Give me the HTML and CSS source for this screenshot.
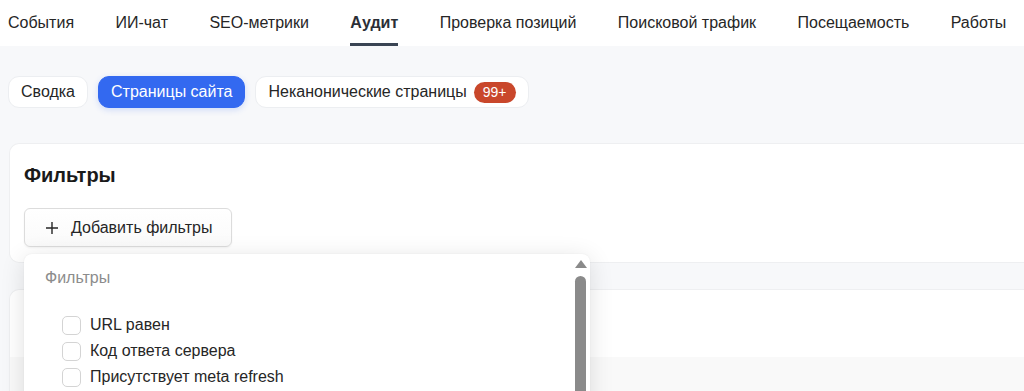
FILE: index.html
```html
<!DOCTYPE html>
<html lang="ru">
<head>
  <meta charset="UTF-8">
  <meta name="viewport" content="width=device-width, initial-scale=1.0">
  <title>Аудит</title>
  <link rel="stylesheet" href="styles.css">
</head>
<body>

  <nav class="topnav">
    <a class="nav-item">События</a>
    <a class="nav-item">ИИ-чат</a>
    <a class="nav-item">SEO-метрики</a>
    <a class="nav-item active">Аудит</a>
    <a class="nav-item">Проверка позиций</a>
    <a class="nav-item">Поисковой трафик</a>
    <a class="nav-item">Посещаемость</a>
    <a class="nav-item">Работы</a>
  </nav>

  <main class="content">
    <div class="tabs">
      <button class="tab">Сводка</button>
      <button class="tab selected">Страницы сайта</button>
      <button class="tab">Неканонические страницы <span class="badge">99+</span></button>
    </div>

    <section class="card filters">
      <h2>Фильтры</h2>
      <div class="add-wrap">
        <button class="add-btn">
          <svg width="14" height="14" viewBox="0 0 14 14"><path d="M7 1v12M1 7h12" stroke="#262626" stroke-width="1.4" fill="none"/></svg>
          Добавить фильтры
        </button>

        <!-- dropdown with filter list -->
        <div class="dropdown">
          <div class="dropdown-list">
            <div class="group-label">Фильтры</div>
            <label class="option"><span class="check"></span>URL равен</label>
            <label class="option"><span class="check"></span>Код ответа сервера</label>
            <label class="option"><span class="check"></span>Присутствует meta refresh</label>
          </div>
          <div class="scrollbar">
            <div class="arrow"></div>
            <div class="thumb"></div>
          </div>
        </div>
      </div>
    </section>

    <section class="card results">
      <div class="results-top"></div>
      <div class="results-head"></div>
    </section>
  </main>

</body>
</html>
```

FILE: styles.css
```css
* {
  box-sizing: border-box;
}
html, body {
  margin: 0;
  height: 100%;
  overflow: hidden;
}
body {
  background-color: #f7f8fa;
  color: #262626;
  font-family: "Liberation Sans", Arial, sans-serif;
  font-size: 16px;
}
.topnav {
  display: flex;
  gap: 41.4px;
  height: 46px;
  padding-left: 8px;
  background: #fff;
  white-space: nowrap;
}
.nav-item {
  display: flex;
  align-items: center;
  height: 46px;
  padding-top: 3px;
  border-bottom: 3px solid transparent;
  color: #262626;
}
.nav-item.active {
  font-weight: bold;
  color: #2b2f36;
  border-bottom-color: #3a4453;
}
.content {
  padding: 30px 0 0 9px;
}
.tabs {
  display: flex;
  gap: 10px;
  margin-left: -1px;
}
.tab {
  display: flex;
  align-items: center;
  gap: 7px;
  height: 32px;
  padding: 0 12px;
  border: 1px solid #eceef1;
  border-radius: 11px;
  background: #fff;
  color: #262626;
  font-family: inherit;
  font-size: 16px;
}
.tab.selected {
  background: #3369f0;
  border-color: #3369f0;
  color: #fff;
  box-shadow: 0 2px 6px rgba(51, 105, 240, 0.2);
}
.badge {
  display: inline-flex;
  align-items: center;
  height: 21px;
  padding: 0 9px;
  border-radius: 11px;
  background: #c9472b;
  color: #fff;
  font-size: 14px;
}
.card {
  background: #fff;
  border: 1px solid #eeeff1;
  border-right: none;
  border-radius: 10px 0 0 10px;
}
.filters {
  margin-top: 35px;
  padding: 19px 0 15px 14px;
}
.filters h2 {
  margin: 0 0 21px;
  font-size: 20px;
  line-height: 24px;
  color: #1a1a1a;
}
.add-wrap {
  position: relative;
}
.add-btn {
  display: flex;
  align-items: center;
  gap: 12px;
  height: 39px;
  padding: 0 19px 0 20px;
  border: 1px solid #dcdcdc;
  border-radius: 6px;
  background: linear-gradient(#fff, #fafafa);
  box-shadow: 0 1px 2px rgba(0, 0, 0, 0.05);
  color: #262626;
  font-family: inherit;
  font-size: 16px;
}
.dropdown {
  position: absolute;
  top: 46px;
  left: 0;
  z-index: 10;
  display: flex;
  width: 566px;
  height: 200px;
  background: #fff;
  border-radius: 8px 8px 0 0;
  box-shadow: 0 4px 24px rgba(0, 0, 0, 0.12), 0 0 2px rgba(0, 0, 0, 0.06);
}
.dropdown-list {
  flex: 1;
  padding: 14px 0 0 21px;
}
.group-label {
  color: #8c8c8c;
  line-height: 20px;
  margin-bottom: 24px;
}
.option {
  display: flex;
  align-items: center;
  gap: 9px;
  height: 26px;
  padding-left: 17px;
  color: #262626;
}
.check {
  width: 19px;
  height: 19px;
  border: 1px solid #d4d4d4;
  border-radius: 5px;
  background: #fff;
}
.scrollbar {
  width: 18px;
  padding: 6px 0 0 3px;
}
.arrow {
  width: 0;
  height: 0;
  border-left: 6px solid transparent;
  border-right: 6px solid transparent;
  border-bottom: 8px solid #8a8a8a;
}
.thumb {
  width: 11px;
  height: 160px;
  margin-top: 8px;
  border-radius: 6px 6px 0 0;
  background: #8a8a8a;
}
.results {
  margin-top: 26px;
  border-radius: 10px 0 0 0;
  overflow: hidden;
}
.results-top {
  height: 67px;
}
.results-head {
  height: 40px;
  background: #f9f9f9;
}
```
